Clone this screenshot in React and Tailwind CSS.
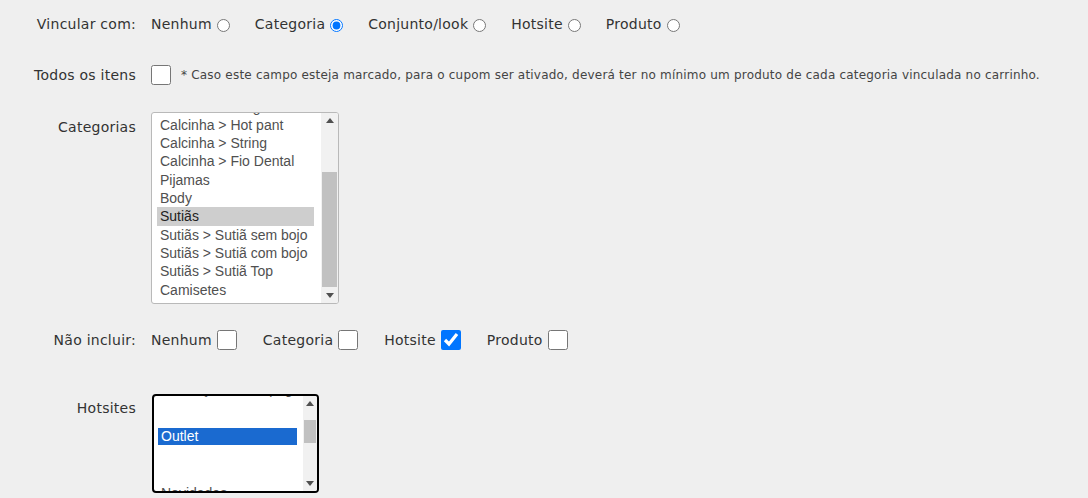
import { useState } from 'react';

const vinculos = ['Nenhum', 'Categoria', 'Conjunto/look', 'Hotsite', 'Produto'];
const exclusoes = ['Nenhum', 'Categoria', 'Hotsite', 'Produto'];

const categorias = [
  'Calcinha > Tanga',
  'Calcinha > Hot pant',
  'Calcinha > String',
  'Calcinha > Fio Dental',
  'Pijamas',
  'Body',
  'Sutiãs',
  'Sutiãs > Sutiã sem bojo',
  'Sutiãs > Sutiã com bojo',
  'Sutiãs > Sutiã Top',
  'Camisetes',
];

function Arrow({ down }) {
  return (
    <svg width="8" height="5" viewBox="0 0 8 5" className="block">
      {down ? <path d="M0 0h8L4 5z" fill="#505050" /> : <path d="M0 5h8L4 0z" fill="#505050" />}
    </svg>
  );
}

// fake listbox scrollbar: arrows at each end, thumb placed by top offset
function Scrollbar({ thumbTop, thumbHeight, width }) {
  return (
    <div className="relative h-full bg-[#f1f1f1] flex flex-col items-center justify-between py-[5px]" style={{ width }}>
      <Arrow />
      <div className="absolute left-[1px] right-[1px] bg-[#c1c1c1]" style={{ top: thumbTop, height: thumbHeight }} />
      <Arrow down />
    </div>
  );
}

function Label({ children, className = '' }) {
  return <div className={`w-[137px] shrink-0 text-right pr-[1px] ${className}`}>{children}</div>;
}

export default function App() {
  const [vinculo, setVinculo] = useState('Categoria');
  const [todos, setTodos] = useState(false);
  const [excluir, setExcluir] = useState({ Hotsite: true });
  const [categoria, setCategoria] = useState('Sutiãs');

  return (
    <div className="w-[1088px] h-[498px] overflow-hidden bg-[#efefef] text-[#333] text-[14px] tracking-[0.25px] font-['DejaVu_Sans',Verdana,sans-serif]">
      {/* Vincular com */}
      <div className="flex items-center h-[20px] mt-[14px]">
        <Label>Vincular com:</Label>
        <div className="flex items-center gap-[25px] ml-[14px]">
          {vinculos.map((v) => (
            <label key={v} className="flex items-center">
              <span>{v}</span>
              <input
                type="radio"
                name="vinculo"
                checked={vinculo === v}
                onChange={() => setVinculo(v)}
                className="ml-[5px] mt-[3px] w-[13px] h-[13px]"
              />
            </label>
          ))}
        </div>
      </div>

      {/* Todos os itens */}
      <div className="flex items-center h-[22px] mt-[30px]">
        <Label>Todos os itens</Label>
        <input
          type="checkbox"
          checked={todos}
          onChange={(e) => setTodos(e.target.checked)}
          className="ml-[14px] w-[20px] h-[20px] m-0"
        />
        <span className="ml-[10px] text-[12px] tracking-[0.2px] text-[#444]">
          * Caso este campo esteja marcado, para o cupom ser ativado, deverá ter no mínimo um produto de cada categoria vinculada no carrinho.
        </span>
      </div>

      {/* Categorias */}
      <div className="flex mt-[26px]">
        <Label className="pt-[5px] leading-[20px]">Categorias</Label>
        <div className="ml-[14px] w-[188px] h-[192px] flex border border-[#b9b9b9] rounded-[3px] bg-white overflow-hidden">
          <div className="flex-1 overflow-hidden pl-[5px] pr-[7px]">
            <div className="-mt-[15.5px] font-['Liberation_Sans',Arial,sans-serif] tracking-normal text-[#505050] leading-[18.33px]">
              {categorias.map((c) => (
                <div
                  key={c}
                  onClick={() => setCategoria(c)}
                  className={`pl-[3px] whitespace-nowrap ${categoria === c ? 'bg-[#cecece] text-[#222]' : ''}`}
                >
                  {c}
                </div>
              ))}
            </div>
          </div>
          <Scrollbar width={17} thumbTop={59} thumbHeight={115} />
        </div>
      </div>

      {/* Não incluir */}
      <div className="flex items-center h-[22px] mt-[25px]">
        <Label>Não incluir:</Label>
        <div className="flex items-center gap-[26px] ml-[14px]">
          {exclusoes.map((v) => (
            <label key={v} className="flex items-center">
              <span>{v}</span>
              <input
                type="checkbox"
                checked={!!excluir[v]}
                onChange={(e) => setExcluir({ ...excluir, [v]: e.target.checked })}
                className="ml-[5px] m-0 w-[20px] h-[20px]"
              />
            </label>
          ))}
        </div>
      </div>

      {/* Hotsites */}
      <div className="flex mt-[43px]">
        <Label className="pt-[4px] leading-[20px]">Hotsites</Label>
        <div className="ml-[15px] w-[167px] h-[99px] flex border-2 border-black rounded-[4px] bg-white overflow-hidden">
          <div className="flex-1 overflow-hidden pl-[4px] pr-[6px]">
            <div className="-mt-[15px] font-['Liberation_Sans',Arial,sans-serif] tracking-normal text-[#505050] leading-[17px]">
              <div className="pl-[3px] whitespace-nowrap">Promoção Relâmpago</div>
              <div className="h-[30px]" />
              <div className="pl-[3px] bg-[#1a6ad0] text-white">Outlet</div>
              <div className="h-[40px]" />
              <div className="pl-[3px] whitespace-nowrap">Novidades</div>
            </div>
          </div>
          <Scrollbar width={14} thumbTop={24} thumbHeight={23} />
        </div>
      </div>
    </div>
  );
}
